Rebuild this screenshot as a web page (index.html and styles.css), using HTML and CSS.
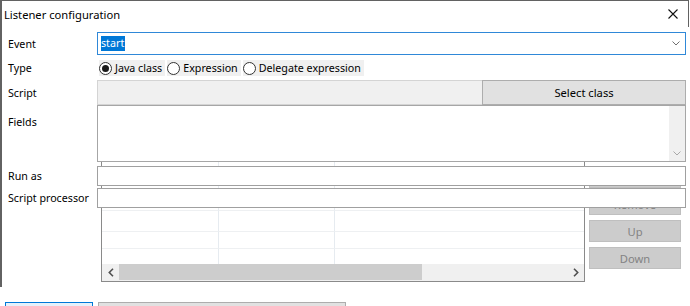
FILE: index.html
```html
<!DOCTYPE html>
<html lang="en">
<head>
  <meta charset="UTF-8">
  <title>Listener configuration</title>
  <link rel="stylesheet" href="styles.css">
</head>
<body>
  <!-- Окно диалога -->
  <div class="window">
    <div class="titlebar">
      <span class="title">Listener configuration</span>
      <svg class="close" width="10" height="10" viewBox="0 0 10 10"><path d="M0.5 0.5L9.5 9.5M9.5 0.5L0.5 9.5" stroke="#111" stroke-width="1.1" fill="none"/></svg>
    </div>

    <!-- Таблица и кнопки, которые лежат под формой -->
    <div class="backdrop">
      <div class="grid-table">
        <div class="tbody">
          <div class="cell"></div><div class="cell"></div><div class="cell last"></div>
          <div class="cell"></div><div class="cell"></div><div class="cell last"></div>
          <div class="cell"></div><div class="cell"></div><div class="cell last"></div>
          <div class="cell"></div><div class="cell"></div><div class="cell last"></div>
        </div>
        <div class="hscroll">
          <span class="arrow"><svg width="6" height="9" viewBox="0 0 6 9"><path d="M5 0.8L1.3 4.5L5 8.2" stroke="#505050" stroke-width="1.6" fill="none"/></svg></span>
          <span class="thumb"></span>
          <span class="track"></span>
          <span class="arrow"><svg width="6" height="9" viewBox="0 0 6 9"><path d="M1 0.8L4.7 4.5L1 8.2" stroke="#505050" stroke-width="1.6" fill="none"/></svg></span>
        </div>
      </div>
      <div class="side-buttons">
        <button class="side-btn">Add</button>
        <button class="side-btn">Edit</button>
        <button class="side-btn">Remove</button>
        <button class="side-btn">Up</button>
        <button class="side-btn">Down</button>
      </div>
    </div>

    <!-- Форма -->
    <div class="form">
      <div class="row row-event">
        <label>Event</label>
        <div class="combo">
          <span class="selected">start</span>
          <svg width="8" height="5" viewBox="0 0 8 5"><path d="M0.5 0.5L4 4L7.5 0.5" stroke="#707070" fill="none"/></svg>
        </div>
      </div>

      <div class="row row-type">
        <label>Type</label>
        <div class="radios">
          <span class="radio checked"><span class="dot"></span>Java class</span>
          <span class="radio"><span class="dot"></span>Expression</span>
          <span class="radio"><span class="dot"></span>Delegate expression</span>
        </div>
      </div>

      <div class="row row-script">
        <label>Script</label>
        <div class="script-field"></div>
        <button class="select-btn">Select class</button>
      </div>

      <div class="row row-fields">
        <label>Fields</label>
        <div class="textarea">
          <div class="vscroll">
            <svg width="8" height="5" viewBox="0 0 8 5"><path d="M0.5 0.5L4 4L7.5 0.5" stroke="#a8a8a8" fill="none"/></svg>
          </div>
        </div>
      </div>

      <div class="row row-runas">
        <label>Run as</label>
        <div class="input"></div>
      </div>

      <div class="row row-processor">
        <label>Script processor</label>
        <div class="input"></div>
      </div>
    </div>
  </div>

  <!-- Нижние кнопки (видна только верхняя кромка) -->
  <div class="footer">
    <button class="btn btn-default" aria-label="OK"></button>
    <button class="btn" aria-label="Cancel"></button>
  </div>
</body>
</html>
```

FILE: styles.css
```css
/* Основные стили */
* {
  box-sizing: border-box;
}

body {
  margin: 0;
  width: 690px;
  height: 306px;
  overflow: hidden;
  background: #ffffff;
  font-family: 'Noto Sans', 'Open Sans', sans-serif;
  font-size: 10.7px;
  color: #000000;
}

button {
  font-family: inherit;
  font-size: inherit;
  margin: 0;
  padding: 0;
}

/* Окно */
.window {
  position: relative;
  width: 689px;
  height: 287px;
  border-top: 1px solid #626262;
  border-left: 2px solid #626262;
}

.titlebar {
  height: 26px;
  display: flex;
  align-items: center;
  justify-content: space-between;
  padding-left: 2px;
  padding-right: 10px;
  border-right: 1px solid #626262;
}

.title {
  font-size: 11.2px;
}

/* Слой под формой */
.backdrop {
  position: absolute;
  left: 99px;
  top: 138px;
  display: flex;
  gap: 4px;
  z-index: 0;
}

.grid-table {
  width: 484px;
  height: 143px;
  border: 1px solid #8a8a8a;
  background: #ffffff;
  display: flex;
  flex-direction: column;
}

.tbody {
  display: grid;
  grid-template-columns: 117px 116px 1fr;
  grid-template-rows: 71px 21px 17px 15px;
}

.cell {
  border-right: 1px solid #e6ebf0;
  border-bottom: 1px solid #eef0f2;
}

.cell.last {
  border-right: none;
}

.tbody .cell:nth-last-child(-n+3) {
  border-bottom: none;
}

.hscroll {
  height: 17px;
  display: flex;
  background: #f0f0f0;
}

.arrow {
  width: 17px;
  display: flex;
  align-items: center;
  justify-content: center;
}

.thumb {
  width: 303px;
  height: 16px;
  background: #cdcdcd;
}

.track {
  flex: 1;
}

.side-buttons {
  display: flex;
  flex-direction: column;
  gap: 5px;
  width: 92px;
}

.side-btn {
  height: 22px;
  background: #cccccc;
  border: 1px solid #bfbfbf;
  color: #838383;
  font-size: 11.2px;
  padding-top: 1px;
}

/* Форма */
.form {
  position: relative;
  z-index: 1;
  padding: 5px 3px 0 6px;
}

.row {
  display: flex;
  align-items: center;
}

.row label {
  width: 89px;
  flex: none;
}

.row-event {
  height: 23px;
}

.combo {
  flex: 1;
  height: 23px;
  border: 1px solid #2f88d8;
  background: #ffffff;
  display: flex;
  align-items: center;
  justify-content: space-between;
  padding: 0 5px 0 3px;
}

.selected {
  background: #0078d7;
  color: #ffffff;
  line-height: 15px;
  padding: 0 1px 0 0;
}

.row-type {
  height: 16px;
  margin-top: 5px;
}

.radios {
  display: flex;
  gap: 2px;
  margin-left: 2px;
  height: 16px;
}

.radio {
  display: flex;
  align-items: center;
  gap: 3px;
  padding-right: 3px;
  background: #f0f0f0;
}

.dot {
  width: 13px;
  height: 13px;
  border: 1px solid #333333;
  border-radius: 50%;
  background: #ffffff;
  display: flex;
  align-items: center;
  justify-content: center;
}

.radio.checked .dot::after {
  content: "";
  width: 7px;
  height: 7px;
  border-radius: 50%;
  background: #1a1a1a;
}

.row-script {
  height: 25px;
  margin-top: 4px;
}

.script-field {
  flex: 1;
  height: 25px;
  background: #f0f0f0;
  border: 1px solid #d4d4d4;
  border-right: none;
}

.select-btn {
  width: 204px;
  height: 25px;
  background: #e1e1e1;
  border: 1px solid #adadad;
  font-size: 11.2px;
}

.row-fields {
  height: 57px;
  align-items: flex-start;
}

.row-fields label {
  padding-top: 10px;
}

.textarea {
  flex: 1;
  height: 57px;
  border: 1px solid #a6a6a6;
  background: #ffffff;
  display: flex;
  justify-content: flex-end;
}

.vscroll {
  width: 16px;
  background: #f0f0f0;
  display: flex;
  align-items: flex-end;
  justify-content: center;
  padding-bottom: 5px;
}

.row-runas,
.row-processor {
  height: 20px;
}

.row-runas {
  margin-top: 4px;
}

.row-processor {
  margin-top: 2px;
}

.input {
  flex: 1;
  height: 20px;
  border: 1px solid #a0a0a0;
  background: #ffffff;
}

/* Нижние кнопки */
.footer {
  display: flex;
  gap: 5px;
  padding: 15px 0 0 5px;
}

.btn {
  width: 248px;
  height: 4px;
  background: #e1e1e1;
  border: 1px solid #adadad;
  border-bottom: none;
}

.btn-default {
  width: 88px;
  border: 1px solid #0078d7;
  border-bottom: none;
  background: #e5f1fb;
}
```
